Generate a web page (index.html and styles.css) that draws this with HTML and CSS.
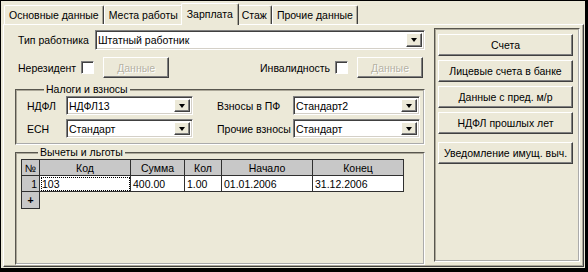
FILE: index.html
```html
<!DOCTYPE html>
<html lang="ru">
<head>
  <meta charset="UTF-8" />
  <title>Зарплата</title>
  <link rel="stylesheet" href="styles.css">
</head>
<body>
  <div class="window">
    <div class="tabs">
      <div class="tab">Основные данные</div>
      <div class="tab">Места работы</div>
      <div class="tab active">Зарплата</div>
      <div class="tab">Стаж</div>
      <div class="tab">Прочие данные</div>
    </div>

    <div class="panel">
      <div class="main">
        <div class="row">
          <span class="lbl-type">Тип работника</span>
          <div class="combo wide"><span class="combo-text">Штатный работник</span><span class="combo-btn"></span></div>
        </div>

        <div class="row flags">
          <div class="flag">
            <span>Нерезидент</span>
            <span class="check"></span>
            <button class="btn disabled">Данные</button>
          </div>
          <div class="flag">
            <span>Инвалидность</span>
            <span class="check"></span>
            <button class="btn disabled">Данные</button>
          </div>
        </div>

        <fieldset class="group taxes">
          <legend>Налоги и взносы</legend>
          <div class="tax-row">
            <span class="lbl-short">НДФЛ</span>
            <div class="combo small"><span class="combo-text">НДФЛ13</span><span class="combo-btn"></span></div>
            <span class="lbl-long">Взносы в ПФ</span>
            <div class="combo small"><span class="combo-text">Стандарт2</span><span class="combo-btn"></span></div>
          </div>
          <div class="tax-row">
            <span class="lbl-short">ЕСН</span>
            <div class="combo small"><span class="combo-text">Стандарт</span><span class="combo-btn"></span></div>
            <span class="lbl-long">Прочие взносы</span>
            <div class="combo small"><span class="combo-text">Стандарт</span><span class="combo-btn"></span></div>
          </div>
        </fieldset>

        <fieldset class="group deductions">
          <legend>Вычеты и льготы</legend>
          <table class="grid">
            <tr>
              <th class="c-num">№</th>
              <th class="c-code">Код</th>
              <th class="c-sum">Сумма</th>
              <th class="c-qty">Кол</th>
              <th class="c-date">Начало</th>
              <th class="c-date">Конец</th>
            </tr>
            <tr>
              <td class="rownum">1</td>
              <td class="focus">103</td>
              <td>400.00</td>
              <td>1.00</td>
              <td>01.01.2006</td>
              <td>31.12.2006</td>
            </tr>
            <tr class="add-row">
              <td class="plus">+</td>
              <td></td><td></td><td></td><td></td><td></td>
            </tr>
          </table>
        </fieldset>
      </div>

      <div class="side">
        <button class="btn side-btn">Счета</button>
        <button class="btn side-btn">Лицевые счета в банке</button>
        <button class="btn side-btn">Данные с пред. м/р</button>
        <button class="btn side-btn">НДФЛ прошлых лет</button>
        <button class="btn side-btn gap">Уведомление имущ. выч.</button>
      </div>
    </div>
  </div>
</body>
</html>
```

FILE: styles.css
```css
* { box-sizing: border-box; }
body {
  margin: 0;
  padding: 1px 3px 4px 1px;
  background: #000;
  font-family: "Liberation Sans", Arial, sans-serif;
  font-size: 10.5px;
  color: #000;
}

.window {
  width: 584px;
  height: 267px;
  background: #ece9d8;
  padding: 2px 1px 0 2px;
}

/* tabs */
.tabs {
  display: flex;
  align-items: flex-end;
  height: 21px;
  padding-left: 1px;
}
.tab {
  height: 19px;
  padding: 0 4px;
  line-height: 18px;
  border-top: 1px solid #fff;
  border-left: 1px solid #fff;
  border-right: 1px solid #404040;
  box-shadow: inset -1px 0 #aca899;
  border-radius: 2px 2px 0 0;
  white-space: nowrap;
}
.tab.active {
  position: relative;
  z-index: 1;
  height: 22px;
  margin: 0 -2px -1px;
  padding: 0 5px;
  line-height: 20px;
  background: #ece9d8;
}

/* panel */
.panel {
  display: flex;
  height: 243px;
  border: 1px solid;
  border-color: #fff #404040 #404040 #fff;
  box-shadow: inset -1px -1px #aca899;
}
.main {
  width: 410px;
  margin-left: 11px;
  padding-top: 5px;
}
.side {
  width: 146px;
  height: 234px;
  margin: 3px 0 0 9px;
  border: 2px groove #fff;
  border-color: #aca899 #fff #fff #aca899;
  padding: 4px 0 0 2px;
  display: flex;
  flex-direction: column;
  gap: 4px;
}

.row {
  display: flex;
  align-items: center;
  padding-left: 3px;
  white-space: nowrap;
}
.lbl-type { width: 77px; }

.flags {
  justify-content: space-between;
  margin-top: 7px;
  padding-right: 2px;
}
.flag {
  display: flex;
  align-items: center;
}
.check {
  width: 13px;
  height: 13px;
  margin: 0 9px 0 5px;
  background: #fff;
  border: 1px solid;
  border-color: #808080 #fff #fff #808080;
  box-shadow: inset 1px 1px #404040;
}

/* combo boxes */
.combo {
  display: flex;
  height: 20px;
  background: #fff;
  border: 1px solid;
  border-color: #808080 #fff #fff #808080;
  box-shadow: inset 1px 1px #404040, inset -1px -1px #d4d0c8;
  padding: 2px;
}
.combo.wide { width: 330px; }
.combo.small { width: 127px; height: 19px; }
.combo-text {
  flex: 1;
  line-height: 15px;
  white-space: nowrap;
}
.combo-btn {
  width: 16px;
  display: flex;
  align-items: center;
  justify-content: center;
  background: #ece9d8;
  border: 1px solid;
  border-color: #fff #404040 #404040 #fff;
  box-shadow: inset -1px -1px #808080;
}
.combo-btn::after {
  content: "";
  border-left: 3.5px solid transparent;
  border-right: 3.5px solid transparent;
  border-top: 4px solid #000;
}

/* buttons */
.btn {
  font: inherit;
  color: #000;
  height: 21px;
  background: #ece9d8;
  border: 1px solid;
  border-color: #fff #404040 #404040 #fff;
  box-shadow: inset -1px -1px #808080;
  padding: 0;
  white-space: nowrap;
}
.btn.disabled {
  width: 66px;
  color: #b5b2a4;
  text-shadow: 1px 1px #fff;
}
.side-btn {
  width: 135px;
  height: 22px;
}
.side-btn.gap { margin-top: 4px; }

/* group boxes */
.group {
  margin: 0;
  border: 2px groove #fff;
  border-color: #aca899 #fff #fff #aca899;
}
.group legend {
  padding: 0 2px;
  margin-left: 17px;
  line-height: 13px;
}
.taxes {
  margin-top: 5px;
  padding: 0 0 5px 10px;
  display: flex;
  flex-direction: column;
  gap: 4px;
}
.tax-row {
  display: flex;
  align-items: center;
  white-space: nowrap;
}
.lbl-short { width: 39px; }
.lbl-long { width: 76px; margin-left: 24px; }

.deductions {
  margin-top: 1px;
  height: 119px;
  padding: 0 0 0 4px;
}

/* grid */
.grid {
  border-collapse: collapse;
  font-size: 10.5px;
}
.grid th, .grid td {
  height: 16px;
  padding: 0 2px;
  border: 1px solid #303030;
  white-space: nowrap;
}
.grid th {
  background: #c8c8c8;
  font-weight: normal;
  text-align: center;
}
.grid td { background: #fff; }
.c-num { width: 18px; }
.c-code { width: 91px; }
.c-sum { width: 54px; }
.c-qty { width: 37px; }
.c-date { width: 91px; }
.grid td.rownum {
  background: #c8c8c8;
  text-align: right;
}
.grid td.focus {
  outline: 1px dotted #000;
  outline-offset: -2px;
}
.add-row td {
  border: none;
  background: none;
}
.grid .add-row td.plus {
  height: 17px;
  border: 1px solid #303030;
  background: #c8c8c8;
  text-align: center;
  font-weight: bold;
}
```
